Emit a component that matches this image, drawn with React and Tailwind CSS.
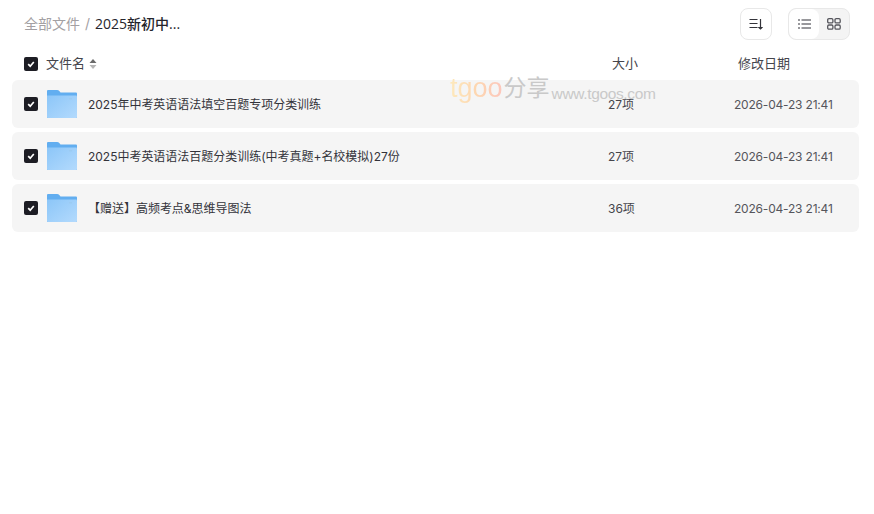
const font = { fontFamily: 'Inter,"Noto Sans CJK SC",sans-serif' };

function Check() {
  return (
    <span className="flex h-[14px] w-[14px] shrink-0 items-center justify-center rounded-[2px] bg-[#1d1d24]">
      <svg width="10" height="10" viewBox="0 0 10 10" fill="none">
        <path d="M2.2 5.2 L4.2 7.2 L7.8 3" stroke="#fff" strokeWidth="1.7" />
      </svg>
    </span>
  );
}

function Folder() {
  return (
    <svg width="30" height="28" viewBox="0 0 30 28" className="block shrink-0">
      <defs>
        <linearGradient id="fg" x1="0" y1="0" x2="1" y2="1">
          <stop offset="0" stopColor="#8cc6f8" />
          <stop offset="1" stopColor="#b3dafd" />
        </linearGradient>
      </defs>
      <path d="M1 0 H10 Q11.5 0 12.5 1.2 L13.5 2.5 H29 Q30 2.5 30 3.5 V27 Q30 28 29 28 H1 Q0 28 0 27 V1 Q0 0 1 0Z" fill="#62aef0" />
      <path d="M0 5.5 H29 Q30 5.5 30 6.5 V27 Q30 28 29 28 H1 Q0 28 0 27 Z" fill="url(#fg)" />
      <rect x="22" y="8" width="3" height="1.5" fill="#9ccbf2" />
    </svg>
  );
}

const rows = [
  ["2025年中考英语语法填空百题专项分类训练", "27项"],
  ["2025中考英语语法百题分类训练(中考真题+名校模拟)27份", "27项"],
  ["【赠送】高频考点&思维导图法", "36项"],
];

export default function App() {
  return (
    <div className="relative h-[514px] w-[874px] bg-white" style={font}>
      <div className="flex h-12 items-start justify-between pl-6 pr-6 pt-2">
        <div className="flex h-[31px] items-center text-[14px]">
          <span className="text-[#a3a0a3]">全部文件</span>
          <span className="mx-[5px] text-[#a3a0a3]">/</span>
          <span className="font-medium text-[#25252c]" style={{ fontFamily: '"Open Sans","Noto Sans CJK SC",sans-serif' }}>2025新初中...</span>
        </div>
        <div className="flex gap-4">
          <div className="flex h-8 w-8 items-center justify-center rounded-lg border border-[#e8e8e8]">
            <svg width="14" height="12" viewBox="0 0 14 12" fill="none" stroke="#33333a" strokeWidth="1.2">
              <path d="M0.5 1.5H8.5M0.5 5.5H8.5M0.5 9.5H8.5" />
              <path d="M11.5 1V10.5" />
              <path d="M10 9.5H13L11.5 11Z" fill="#33333a" />
            </svg>
          </div>
          <div className="flex h-8 w-[62px] overflow-hidden rounded-lg border border-[#e8e8e8] bg-[#f4f4f4]">
            <div className="flex h-full w-[30px] items-center justify-center rounded-lg bg-white">
              <svg width="13" height="10" viewBox="0 0 13 10" fill="none" stroke="#33333a" strokeWidth="1.2">
                <path d="M0 1H2M0 5H2M0 9H2M3.5 1H13M3.5 5H13M3.5 9H13" />
              </svg>
            </div>
            <div className="flex flex-1 items-center justify-center">
              <svg width="14" height="12" viewBox="0 0 14 12" fill="none" stroke="#55555c" strokeWidth="1.3">
                <rect x="0.7" y="0.7" width="5.2" height="4.2" rx="1.2" />
                <rect x="8" y="0.7" width="5.2" height="4.2" rx="1.2" />
                <rect x="0.7" y="7" width="5.2" height="4.2" rx="1.2" />
                <rect x="8" y="7" width="5.2" height="4.2" rx="1.2" />
              </svg>
            </div>
          </div>
        </div>
      </div>

      <div className="flex h-8 items-center px-6 text-[13px] text-[#45454c]">
        <Check />
        <span className="ml-2">文件名</span>
        <svg width="8" height="12" viewBox="0 0 8 12" className="ml-1">
          <path d="M4 1 L7.5 5 H0.5Z" fill="#6a6a6a" />
          <path d="M4 11 L7.5 7 H0.5Z" fill="#b5b5b5" />
        </svg>
        <span className="ml-[515px] w-[126px]">大小</span>
        <span>修改日期</span>
      </div>

      <div className="mx-3 flex w-[847px] flex-col gap-1">
        {rows.map(([name, size]) => (
          <div key={name} className="flex h-12 items-center rounded-md bg-[#f5f5f5] pl-3 text-[12px] text-[#45454c]">
            <Check />
            <span className="ml-[9px] block"><Folder /></span>
            <span className="ml-[11px] w-[520px] pt-[1px] tracking-[-0.02px] text-[#33333a]">{name}</span>
            <span className="w-[126px] pt-[1px]">{size}</span>
            <span className="pt-[1px] tracking-[-0.2px] text-[#55555c]">2026-04-23 21:41</span>
          </div>
        ))}
      </div>

      <div className="pointer-events-none absolute left-[450px] top-[72px] flex items-start" style={{ fontFamily: '"Liberation Sans","Noto Sans CJK SC",sans-serif' }}>
        <span className="text-[27px] leading-[32px]" style={{ background: "linear-gradient(90deg,#fde9bd,#fdd6b0,#fcc6bc)", WebkitBackgroundClip: "text", color: "transparent" }}>tgoo</span>
        <span className="ml-[1px] text-[23px] leading-[32px] text-[#c9c9c9]">分享</span>
        <span className="ml-[2px] mt-[12px] text-[15.5px] leading-[20px] tracking-[-0.35px] text-[#c9c9c9]">www.tgoos.com</span>
      </div>
    </div>
  );
}
